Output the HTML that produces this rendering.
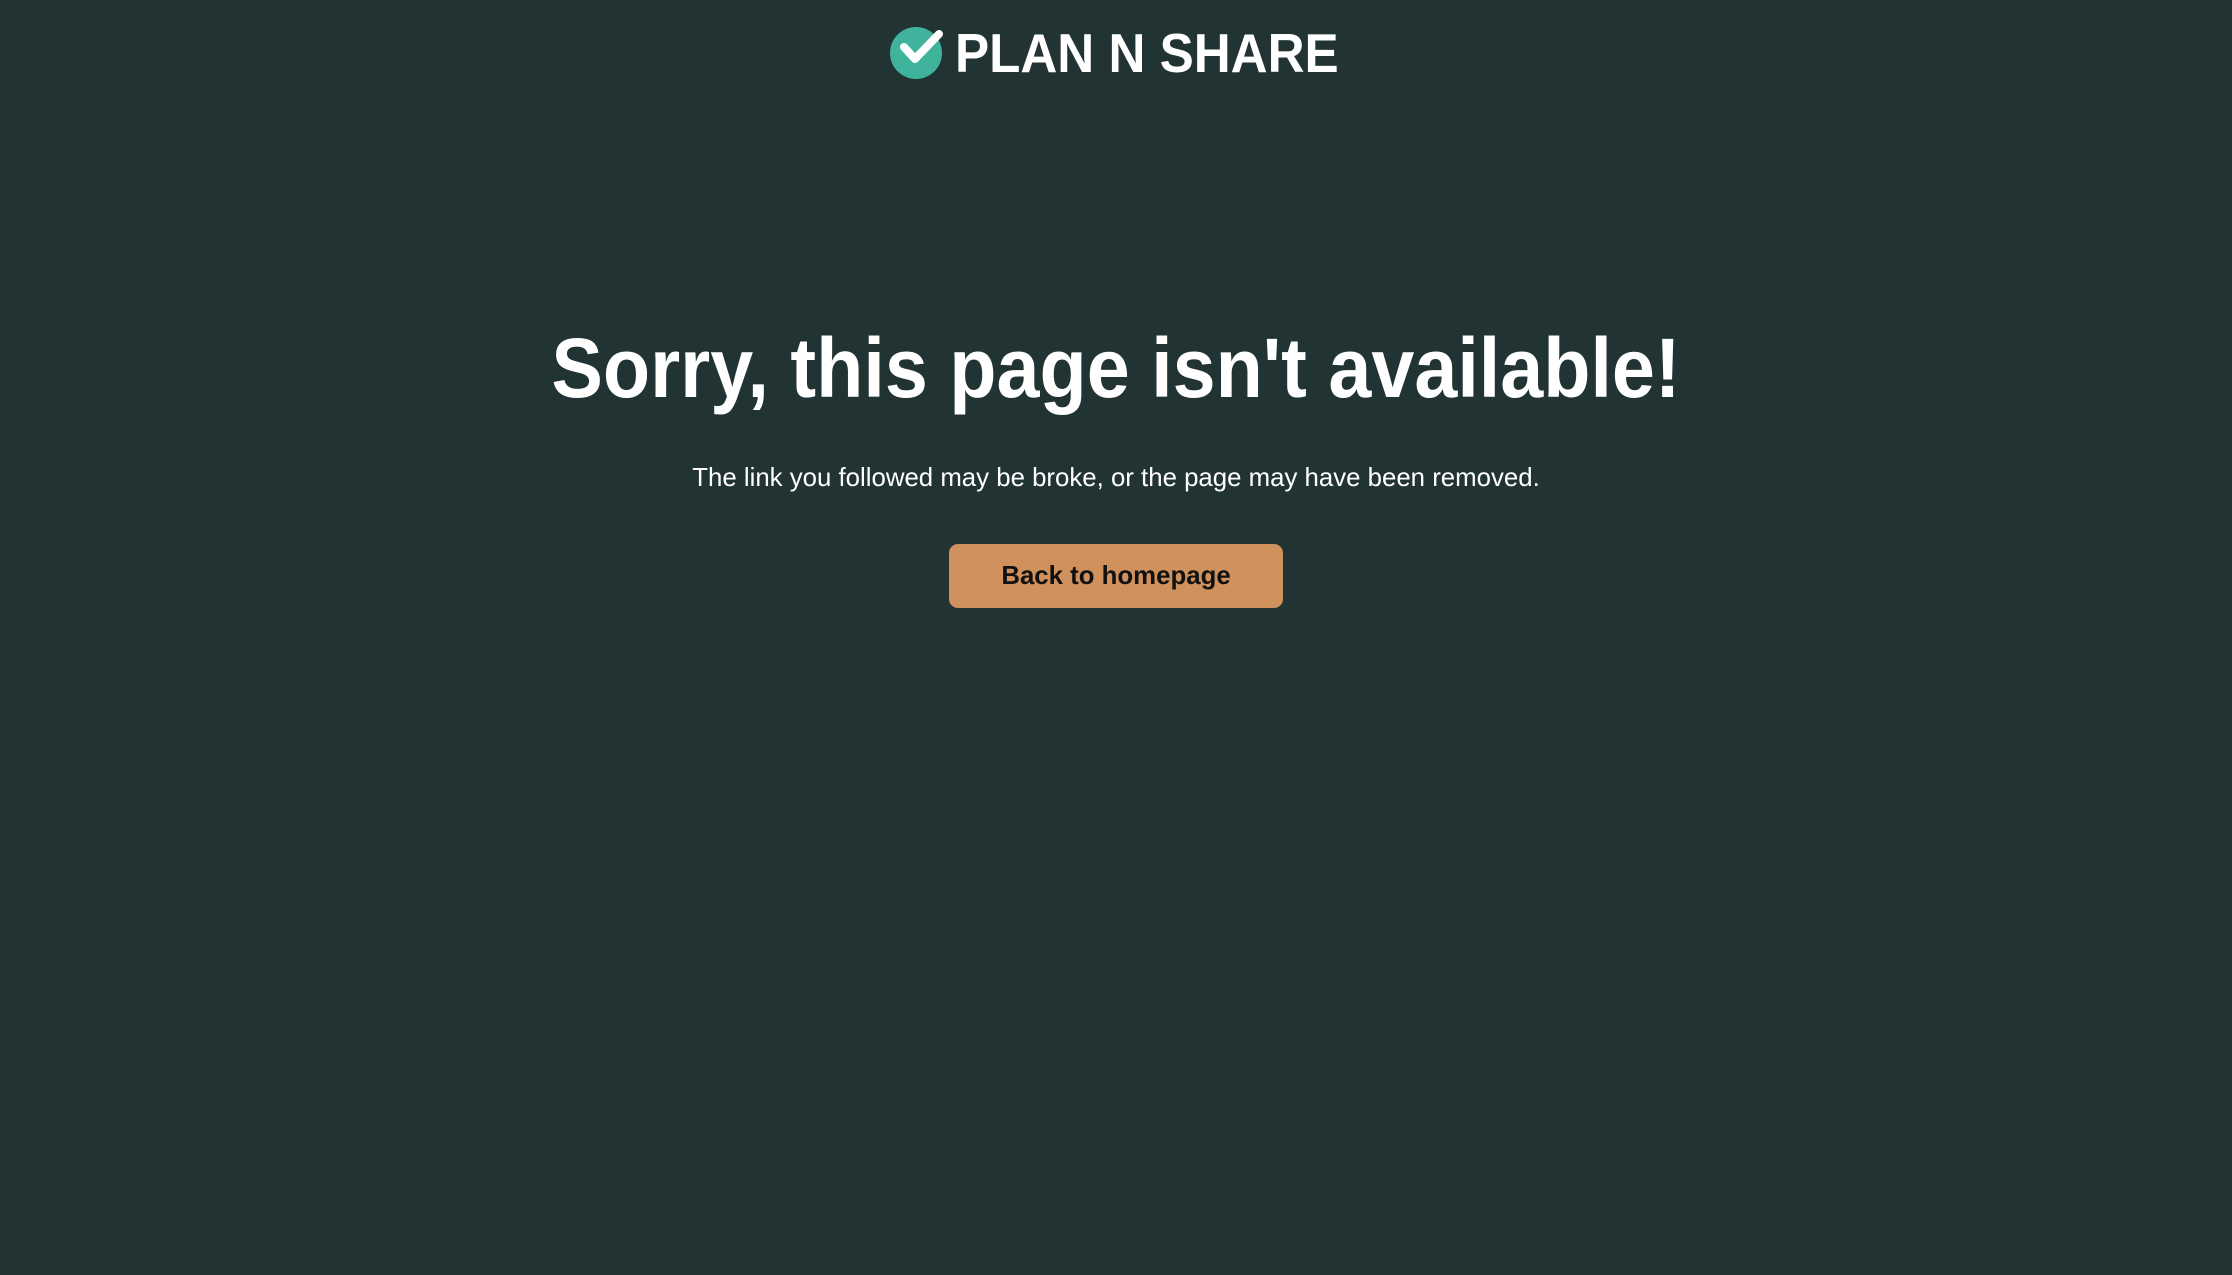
<!DOCTYPE html>
<html><head><meta charset="utf-8"><style>
html,body{margin:0;padding:0;width:2232px;height:1275px;background:#223333;overflow:hidden;font-family:"Liberation Sans",Arial,sans-serif;color:#fff}
.logo{position:absolute;left:889px;top:24px;height:58px;display:flex;align-items:center}
.logo span{font-weight:bold;font-size:55px;margin-left:10px;line-height:1;display:inline-block;transform:scaleX(0.93);transform-origin:left center}
h1{position:absolute;left:0;width:2232px;top:318px;margin:0;text-align:center;font-size:84px;font-weight:bold;line-height:100px;transform:scaleX(0.92)}
p{position:absolute;left:0;width:2232px;top:462px;margin:0;text-align:center;font-size:25.8px;line-height:32px}
.btn{position:absolute;left:949px;top:544px;width:334px;height:64px;background:#d0915c;border-radius:9px;color:#111;font-weight:bold;font-size:25.8px;line-height:64px;text-align:center}
</style></head><body>
<div class="logo"><svg width="56" height="58" viewBox="0 0 56 58"><circle cx="27" cy="29" r="26" fill="#3fb39b"/><path d="M15 23 L26 35 L50 10" fill="none" stroke="#fff" stroke-width="8" stroke-linecap="round" stroke-linejoin="round"/></svg><span>PLAN N SHARE</span></div>
<h1>Sorry, this page isn't available!</h1>
<p>The link you followed may be broke, or the page may have been removed.</p>
<div class="btn">Back to homepage</div>
</body></html>
